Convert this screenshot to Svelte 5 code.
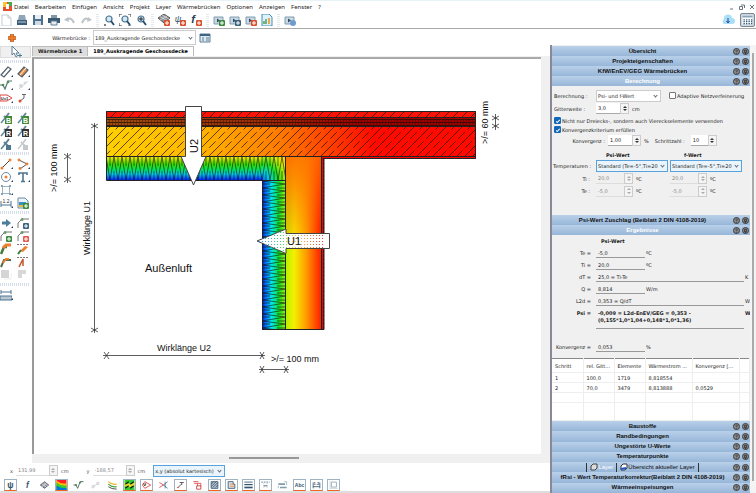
<script>
  let menus = [
    "Datei",
    "Bearbeiten",
    "Einfügen",
    "Ansicht",
    "Projekt",
    "Layer",
    "Wärmebrücken",
    "Optionen",
    "Anzeigen",
    "Fenster",
    "?",
  ];

  let activeTab = "189_Auskragende Geschossdecke";
  let tabs = ["Wärmebrücke 1", "189_Auskragende Geschossdecke"];

  let adaptive = false;
  let quads = true;
  let criterion = true;

  // shapes of every icon on a 12 x 12 grid
  const doc = '<path d="M1 3h9v7H1z" fill="#c9d8e2" stroke="#7f9cb0"/><path d="M4 4.500l3 2-3 2z" fill="#2f4a5e"/>';
  const plusBadge = (c) =>
    `<rect x="6" y="6" width="6" height="6" rx="1" fill="${c}"/><path d="M9 7v4M7 9h4" stroke="#fff"/>`;
  const pipette = (c) =>
    `<path d="M1 11l5-6" stroke="${c}" stroke-width="1.500"/><path d="M4 4l4 4M6 5l3-4" stroke="${c}" stroke-width="2"/>`;
  const letter = (c, t) =>
    `<rect x="5" y="4" width="7" height="8" fill="${c}"/><text x="8.500" y="10.500" font-size="7" font-weight="bold" text-anchor="middle" fill="#fff">${t}</text>`;
  const loupe =
    '<circle cx="6" cy="5" r="3" fill="#d5e9f5" stroke="#4b7390" stroke-width="1.200"/><path d="M8 7l3 4" stroke="#244d6b" stroke-width="1.800"/>';
  const node = '<path d="M1 11V6l4-4h7" stroke="#777"/><circle cx="5" cy="2.500" r="1.500" fill="#6a9a72"/>';
  const rainbow =
    '<path d="M0 0h12v12H0z" fill="#f22"/><path d="M0 1q5 4 12 3v8H0z" fill="#fb0"/><path d="M0 3q5 4 12 4v5H0z" fill="#3c3"/><path d="M0 7q5 3 12 3v2H0z" fill="#07d"/>';

  const icons = {
    neu: '<path d="M2 1h6l3 3v8H2z" fill="#fff" stroke="#c3cdd6"/><path d="M8 1v3h3" stroke="#c3cdd6"/>',
    open: '<path d="M3 1h6l1 5H2z" fill="#8fa6b8"/><path d="M1 6h10v5H1z" fill="#3d5c7a"/><path d="M2 8h8" stroke="#b9cad6"/>',
    save: '<path d="M1 1h10v10H1z" fill="#4f708c"/><path d="M3 1h6v4H3z" fill="#e8eff4"/><path d="M3 7h6v4H3z" fill="#cfdbe4"/>',
    print: '<path d="M3 1h6v3H3z" fill="#8298a8"/><path d="M0 4h12v5H0z" fill="#3a5870"/><path d="M3 7h6v4H3z" fill="#e6edf2" stroke="#5c7f99"/>',
    undo: '<path d="M3 6q4-4 7 3" stroke="#bcc3c8" stroke-width="2"/><path d="M0 6l4-3 1 5z" fill="#bcc3c8"/>',
    redo: '<path d="M9 6q-4-4-7 3" stroke="#bcc3c8" stroke-width="2"/><path d="M12 6l-4-3-1 5z" fill="#bcc3c8"/>',
    zoom: loupe + '<path d="M1 11h2M2 10v2" stroke="#555"/>',
    zoomfit: loupe + '<path d="M0 3V0h3M9 0h3v3M0 9v3h3M9 12h3" stroke="#333"/>',
    zoomplus: loupe + '<path d="M4 5h4M6 3v4" stroke="#222"/>',
    mesh: '<path d="M0 4l6-4 6 4-6 5z" fill="#8a949b" stroke="#555"/><path d="M2 2.500l7 4M4 1l7 4M2 6l7-4" stroke="#eee" stroke-width=".6"/>' + plusBadge("#d9512c"),
    psi: '<text x="4" y="8" font-size="9" font-style="italic" text-anchor="middle" fill="#31536d">ψ</text>' + plusBadge("#d9512c"),
    fval: '<text x="3" y="9" font-size="11" font-weight="bold" font-style="italic" text-anchor="middle" fill="#243f55">f</text>' + plusBadge("#d9512c"),
    layerplus: doc + plusBadge("#3b8b41"),
    layerb: doc + plusBadge("#3b6480"),
    layerx: doc + plusBadge("#d9512c"),
    report: '<path d="M1 0h7l3 3v9H1z" fill="#dff1fb" stroke="#3f8fb9"/><path d="M3 10V7M5 10V5" stroke="#4aa64f" stroke-width="1.500"/><path d="M8 10V4" stroke="#f08a24" stroke-width="1.500"/>',
    layerdot: doc + '<circle cx="9" cy="9" r="3" fill="#6d9bd1"/>',
    plus: '<path d="M6 2v8M2 6h8" stroke="#9a4a17" stroke-width="3.600"/><path d="M6 2v8M2 6h8" stroke="#ec7a26" stroke-width="2.400"/>',
    card: '<path d="M1 2h10v8H1z" fill="#dce9f0" stroke="#5c7f99"/><path d="M1 3h10" stroke="#3c6380" stroke-width="2"/><path d="M3 6h2M7 6h3M3 8h2M7 8h3" stroke="#5c7f99"/>',
    cursor: '<path d="M2 0v9l2-2 2 4 1.500-1L6 7h3z" fill="#fff" stroke="#5c7f99"/><path d="M8 9.500h4M10 7.500v4" stroke="#4d7a99"/>',
    wall: '<path d="M1 9l7-8 3 2-7 8z" fill="#fff" stroke="#52616d" stroke-width="1.200"/>',
    wallfill: '<path d="M1 8l6-7 4 3-6 7z" fill="#ef8c3b" stroke="#52616d" stroke-width="1.200"/><path d="M3 9l6-7" stroke="#fff"/>',
    poly: '<path d="M0 6h3l2 4 3-8h4" stroke="#55776b" stroke-width="1.200"/><circle cx="3" cy="6" r="1.300" fill="#4e8c58"/><circle cx="8" cy="3" r="1.300" fill="#4e8c58"/>',
    polyoff: '<path d="M2 10l9-8" stroke="#d2d6d9"/><circle cx="4" cy="7" r="2" fill="#d5d9dc"/><circle cx="8" cy="4" r="1.500" fill="#d5d9dc"/>',
    uarrow: '<path d="M0 3h7l5 3-5 3H0z" fill="#fff" stroke="#e04040"/><text x="4.500" y="7.500" font-size="4" font-weight="bold" text-anchor="middle" fill="#222">U=1</text>',
    temp: '<path d="M3 9l4-3V3M5 2.500h4" stroke="#666"/><circle cx="3" cy="9" r="1.500" fill="#d9512c"/>',
    pipb: pipette("#6b8696") + letter("#3f8a3a", "B"),
    pipr: pipette("#6b8696") + letter("#333", "R"),
    pipw: pipette("#5b8199") + '<rect x="6" y="7" width="5" height="5" fill="#4f7590"/>',
    pipoff: pipette("#c8cdd1") + '<rect x="6" y="7" width="5" height="5" fill="#c2c8cc"/>',
    line: '<path d="M2 10l8-8" stroke="#444"/><circle cx="2" cy="10" r="1.500" fill="#ef7f2e"/><circle cx="10" cy="2" r="1.500" fill="#ef7f2e"/>',
    pline: '<path d="M2 2l8 4-7 5" stroke="#555"/><circle cx="2" cy="2" r="1.400" fill="#ef7f2e"/><circle cx="10" cy="6" r="1.400" fill="#ef7f2e"/><circle cx="3" cy="10.500" r="1.400" fill="#ef7f2e"/>',
    circle: '<circle cx="6" cy="6" r="4.500" stroke="#6d8a9e"/><circle cx="6" cy="6" r="1.500" fill="#ef7f2e"/>',
    text: '<path d="M2 4V2h8v2M6 2v9M4 10.500h4" stroke="#4f7590" stroke-width="1.600"/>',
    rect: '<path d="M2.500 2.500h7v7h-7z" stroke="#9db3c1"/><path d="M1 1h2v2H1zM9 1h2v2H9zM1 9h2v2H1zM9 9h2v2H9z" fill="#8aa3b3"/>',
    dim: '<path d="M1 4v6M11 4v6M1 8h10" stroke="#4f7590"/><text x="6" y="6" font-size="5" text-anchor="middle" fill="#333">1.2</text>',
    image: '<path d="M1 1h7l3 3v7H1z" fill="#eaf5fb" stroke="#6d8a9e"/><path d="M2 5h7v4H2z" fill="#3b8fc4"/><path d="M2 8h7v2H2z" fill="#e7b93c"/>' + plusBadge("#3b8b41"),
    arrow: '<path d="M2 4.500h4V2l5 4-5 4V7.500H2z" fill="#4f7c99"/>',
    nodeb: node + plusBadge("#3b6480"),
    nodeg: node + plusBadge("#3b8b41"),
    noder: node + plusBadge("#e25a50"),
    cuta: '<path d="M1 11l3-7h3" stroke="#3e7a3c" stroke-width="2.500"/><path d="M3 5l3-3h5" stroke="#ef7f2e" stroke-width="3"/>',
    cutb: '<path d="M0 1.500h12" stroke="#777" stroke-dasharray="2 1"/><path d="M3 8l5-5 3 1-5 5z" fill="#ef7f2e"/><path d="M1 11l3-4" stroke="#3e7a3c" stroke-width="2"/>',
    cutc: '<path d="M1 11l3-7h7" stroke="#4e6b4d" stroke-width="2"/><path d="M3 7l3-4h3" stroke="#ef7f2e" stroke-width="2"/>',
    cutd: '<path d="M0 1.500h12" stroke="#777" stroke-dasharray="2 1"/><path d="M2 11l4-8v7" stroke="#c7562a" stroke-width="1.500"/>',
    sq: '<path d="M1 1h8v8H1z" fill="#d5d5d5"/><path d="M4 10h7V4" stroke="#eee"/>',
    corner: '<path d="M1 1h8v4H5v4H1z" fill="#d8d8d8"/>',
    scale: '<path d="M1 1v4M11 1v4M1 3h10" stroke="#4f7590"/><path d="M0 7h12v4H0z" fill="#b9c8d2" stroke="#4f7590"/>',
    bpsi: '<text x="6" y="9" font-size="10" font-weight="bold" text-anchor="middle" fill="#34536c">ψ</text>',
    bf: '<text x="6" y="9" font-size="10" font-weight="bold" font-style="italic" text-anchor="middle" fill="#34536c">f</text>',
    bmesh: '<path d="M1 6l5-4 5 4-5 4z" fill="#8e999f" stroke="#556"/><path d="M3 4.500l5 4M5 3l5 4M3 8l5-4" stroke="#eee" stroke-width=".7"/>',
    rainbow,
    link: '<path d="M3 8l6-4" stroke="#ccc"/><circle cx="3" cy="8" r="1.500" stroke="#c5c9cc"/><circle cx="9" cy="4" r="1.500" stroke="#c5c9cc"/>',
    iso: '<path d="M1 2q4 4 10 3" stroke="#e9b52a" stroke-width="1.500"/><path d="M1 5q4 4 10 3" stroke="#4ba84b" stroke-width="1.500"/><path d="M1 8q4 3 10 3" stroke="#333"/>',
    flux: '<path d="M0 0h12v12H0z" fill="#3c3"/><path d="M0 3q6 3 12 0v4q-6 3-12 0z" fill="#e6e02a"/><path d="M1 5l4-3M7 5l4-3M1 10l4-3M7 10l4-3" stroke="#111" stroke-width="1.400"/>',
    uval: '<path d="M1 6l3-4 7 4-7 4z" stroke="#e04040"/><path d="M3 4v2q1 2 2 0V4" stroke="#222"/>',
    adia: '<path d="M1 3l5 3-5 3" stroke="#e04040"/><path d="M11 2L6 6l5 4M8 2v8" stroke="#4f7590"/>',
    dot: '<path d="M3 9l4-4M5 3h5M7.500 3v3" stroke="#444"/><circle cx="3" cy="9" r="1" fill="#e04040"/>',
    pages: '<path d="M1 2h6M2 4h4" stroke="#e04040"/><path d="M6 4h4v4H6z" stroke="#e04040"/><path d="M5 7h5v4H5z" fill="#fff" stroke="#c03030"/>',
    hatch: '<path d="M2 2h8v8H2z" fill="#b9c8d2" stroke="#34536c"/><path d="M2 5l3-3M2 8l6-6M4 9l6-6M7 9l3-3" stroke="#34536c"/>',
    outline: '<path d="M2 2h6v3h2v5H2z" fill="#d9e4eb" stroke="#34536c"/><path d="M4 5h4M4 7.500h5" stroke="#ef7f2e"/>',
    bars: '<path d="M1 2.500h10" stroke="#34536c"/><path d="M1 5.500h10" stroke="#34536c" stroke-width="1.500"/><path d="M1 9h10" stroke="#34536c" stroke-width="2"/>',
    gridt: '<path d="M1 2.500h10" stroke="#4f7590" stroke-dasharray="2 1"/><path d="M4 4v6M8 4v6" stroke="#8aa3b3" stroke-dasharray="1 1"/><path d="M4 7h4" stroke="#555"/>',
    tags: '<path d="M1 4h8v2H1zM3 8h8v2H3z" fill="#7f9bad"/><path d="M8 2h3v4M1 7v3" stroke="#9db3c1"/>',
    abc: '<text x="6" y="8" font-size="6" font-weight="bold" text-anchor="middle" fill="#34536c">Abc</text>',
    measure: '<path d="M2 3v7M10 3v7M2 8h8" stroke="#34536c"/><text x="6" y="6" font-size="5" font-weight="bold" text-anchor="middle" fill="#34536c">1.2</text>',
    frame: '<path d="M3.500 2.500h6v6h-6z" stroke="#8aa3b3"/><path d="M2 1v9M1 10h10" stroke="#c5d0d7"/>',
  };

  let mainTools = [
    ["neu", "open", "save", "print", "undo", "redo"],
    ["zoom", "zoomfit", "zoomplus"],
    ["mesh", "psi", "fval"],
    ["layerplus", "layerb", "layerx", "report"],
    ["layerdot"],
  ];

  let sideTools = [
    ["wall", "wallfill", "poly", "polyoff", "uarrow", "temp"],
    ["pipb", "pipb", "pipr", "pipr", "pipw", "pipoff"],
    ["line", "pline", "circle", "text", "rect", "", "dim", "image"],
    ["arrow", "nodeb", "nodeg", "noder", "cuta", "cutb", "cutc", "cutd", "sq", "corner"],
    ["scale"],
  ];
  let withMenu = ["wall", "wallfill", "poly", "polyoff", "uarrow", "line", "pline", "circle", "text", "rect", "dim", "arrow", "scale"];

  let viewTools = [
    ["bpsi", true],
    ["bf", false],
    ["bmesh", false],
    ["rainbow", true],
    ["poly", false],
    ["link", false],
    ["iso", false],
    ["flux", true],
    ["uval", true],
    ["adia", false],
    ["dot", true],
    ["pages", false],
    ["hatch", true],
    ["outline", true],
    ["bars", true],
    ["gridt", true],
    ["tags", false],
    ["abc", true],
    ["measure", true],
    ["frame", true],
  ];

  let results = [
    { label: "Te =", value: "-5,0", unit: "ºC" },
    { label: "Ti =", value: "20,0", unit: "ºC" },
    { label: "dT =", value: "25,0 = Ti-Te", unit: "K", wide: true },
    { label: "Q =", value: "8,814", unit: "W/m" },
    { label: "L2d =", value: "0,353 = Q/dT", unit: "W", wide: true },
  ];

  let steps = [
    ["1", "100,0", "1719", "8,818554", ""],
    ["2", "70,0", "3479", "8,813888", "0,0529"],
    ["", "", "", "", ""],
    ["", "", "", "", ""],
  ];

  // hatching and insulation symbols of the section
  const range = (from, to, step) => {
    let out = [];
    for (let v = from; v < to; v += step) out.push(v);
    return out;
  };
  const screed = range(100, 476, 9).map((x) => `M${x} 119l9-9`).join("");
  const concreteSolid = range(80, 476, 16).map((x) => `M${x} 157l31-31`).join("");
  const concreteDash = range(88, 476, 16).map((x) => `M${x} 157l31-31`).join("");
  const woolH = "M106 157" + range(106, 286, 8).map(() => "l4 23l4-23").join("");
  const woolHLines = range(110, 286, 8).map((x) => `M${x} 157v9M${x + 4} 171v9`).join("");
  const woolV = "M262 181" + range(181, 330, 7).map(() => "l23 3l-23 4").join("");
  const woolVLines = range(184, 330, 7).map((y) => `M262 ${y}h8M277 ${y + 4}h8`).join("");
</script>

{#snippet icon(name)}
  <svg class="icon" viewBox="0 0 12 12" fill="none" aria-hidden="true">{@html icons[name]}</svg>
{/snippet}

{#snippet bar(title, light)}
  <div class="bar">
    <span class="bar-title" class:light>{title}</span>
    {@render barButtons()}
  </div>
{/snippet}

{#snippet barButtons()}
  <span class="bar-buttons">
    <button class="round" aria-label="Hilfe">
      <svg viewBox="0 0 8 8"><circle cx="4" cy="4" r="3.500" /><path d="M3 3q1-1.500 2 0L4 4.500M4 5.500v1" /></svg>
    </button>
    <button class="round" aria-label="Anheften">
      <svg viewBox="0 0 8 8"><circle cx="4" cy="4" r="3.500" /><path d="M3 2.500h2v3H3zM4 5v2" /></svg>
    </button>
  </span>
{/snippet}

{#snippet spin(id, value, label, disabled)}
  <span class="spin" class:disabled>
    <input {id} {value} {disabled} aria-label={label} />
    <span class="arrows">
      <button {disabled} class="up" aria-label="Erhöhen"></button>
      <button {disabled} class="down" aria-label="Verringern"></button>
    </span>
  </span>
{/snippet}

<div class="window">
  <header>
    <nav class="menu">
      <svg class="logo" viewBox="0 0 9 9" aria-hidden="true">
        <path d="M0 0h9v9H0z" fill="#e5502b" /><path d="M0 0h4v5H0z" fill="#f9c42c" />
        <path d="M5 0h4v4H5z" fill="#4da64a" /><path d="M3 2h3v5H3z" fill="#fff" />
      </svg>
      {#each menus as menu}
        <button>{menu}</button>
      {/each}
      <span class="window-buttons">
        <button aria-label="Minimieren"><svg viewBox="0 0 8 8"><path d="M2 6h3" /></svg></button>
        <button aria-label="Wiederherstellen"><svg viewBox="0 0 8 8"><path d="M1.500 3.500h3v3h-3zM3 2h3.500v3" /></svg></button>
        <button aria-label="Schließen"><svg viewBox="0 0 8 8"><path d="M2 2l4 4M6 2L2 6" /></svg></button>
      </span>
    </nav>

    <div class="toolbar">
      {#each mainTools as group, i}
        {#if i > 0}<span class="grip"></span>{/if}
        {#each group as tool}
          <button aria-label={tool}>{@render icon(tool)}</button>
        {/each}
      {/each}
      <span class="toolbar-right">
        <button class="cloud" aria-label="Download">
          <svg viewBox="0 0 14 12"><path d="M3 10a3 3 0 0 1 0-5 4 4 0 0 1 8-1 3 3 0 0 1 0 6z" fill="#a9e0f5" /><path d="M7 4v4M5.500 7L7 9l1.500-2" fill="none" stroke="#2540a8" /></svg>
        </button>
        <button class="keypad" aria-label="Raster">
          <svg viewBox="0 0 12 12"><path d="M0 2h12v9H0z" fill="#fff" /><path d="M0 2h12" stroke="#8ba3b5" stroke-width="2" /><path d="M2 5v6M5 5v6M8 5v6M11 5v6" stroke="#234d72" stroke-width="1.500" stroke-dasharray="1.500 .8" /></svg>
        </button>
      </span>
    </div>
  </header>

  <div class="body">
    <div class="work">
      <div class="bridge">
        <button aria-label="Neue Wärmebrücke">{@render icon("plus")}</button>
        <label for="bridge">Wärmebrücke :</label>
        <span class="select bridge-select">
          <select id="bridge"><option>189_Auskragende Geschossdecke</option></select>
        </span>
        <button aria-label="Eigenschaften">{@render icon("card")}</button>
      </div>

      <div class="middle">
        <aside class="side">
          <button class="pointer" aria-label="Auswahl">{@render icon("cursor")}</button>
          {#each sideTools as group}
            <div class="side-grip"></div>
            <div class="side-group">
              {#each group as tool}
                {#if tool}
                  <button aria-label={tool} class:has-menu={withMenu.includes(tool)}>{@render icon(tool)}</button>
                {:else}
                  <span></span>
                {/if}
              {/each}
            </div>
          {/each}
        </aside>

        <div class="drawing">
          <div class="tabs">
            {#each tabs as tab}
              <button class="tab" class:active={activeTab === tab} on:click={() => (activeTab = tab)}>{tab}</button>
            {/each}
          </div>
          <div class="canvas">
            <svg viewBox="34 59 507 395" preserveAspectRatio="xMinYMin meet">
              <defs>
                <linearGradient id="slab" gradientUnits="userSpaceOnUse" x1="106" y1="126" x2="370" y2="100">
                  <stop offset="0" stop-color="#ffd000" />
                  <stop offset="0.35" stop-color="#ffb400" />
                  <stop offset="0.65" stop-color="#ff7a00" />
                  <stop offset="1" stop-color="#ff0a00" />
                </linearGradient>
                <linearGradient id="floor" gradientUnits="userSpaceOnUse" x1="106" y1="0" x2="360" y2="0">
                  <stop offset="0" stop-color="#a04c10" />
                  <stop offset="0.6" stop-color="#a02c08" />
                  <stop offset="1" stop-color="#a00000" />
                </linearGradient>
                <linearGradient id="wool-h" x1="0" y1="0" x2="0" y2="1">
                  <stop offset="0" stop-color="#f0e800" />
                  <stop offset="0.3" stop-color="#3edc00" />
                  <stop offset="0.55" stop-color="#00e060" />
                  <stop offset="0.75" stop-color="#00c8f0" />
                  <stop offset="1" stop-color="#0020ff" />
                </linearGradient>
                <linearGradient id="wool-v">
                  <stop offset="0" stop-color="#0010e0" />
                  <stop offset="0.15" stop-color="#0070ff" />
                  <stop offset="0.4" stop-color="#00e8f0" />
                  <stop offset="0.7" stop-color="#10e030" />
                  <stop offset="1" stop-color="#a0f000" />
                </linearGradient>
                <radialGradient id="corner" gradientUnits="userSpaceOnUse" cx="262" cy="180" r="32">
                  <stop offset="0" stop-color="#0060ff" />
                  <stop offset="0.25" stop-color="#00d8e0" />
                  <stop offset="0.5" stop-color="#20e020" />
                  <stop offset="0.8" stop-color="#d8ee00" />
                  <stop offset="1" stop-color="#ffd000" />
                </radialGradient>
                <linearGradient id="wall">
                  <stop offset="0" stop-color="#b8f000" />
                  <stop offset="0.22" stop-color="#f4f000" />
                  <stop offset="0.55" stop-color="#ff9a00" />
                  <stop offset="0.85" stop-color="#ff3c00" />
                  <stop offset="1" stop-color="#ff1400" />
                </linearGradient>
                <linearGradient id="wall-top" x1="0" y1="0" x2="0.4" y2="1">
                  <stop offset="0" stop-color="#ff7000" />
                  <stop offset="0.35" stop-color="#ff7000" stop-opacity="0.7" />
                  <stop offset="1" stop-color="#ff7000" stop-opacity="0" />
                </linearGradient>
                <linearGradient id="dots-colour">
                  <stop offset="0.1" stop-color="#30a0ff" />
                  <stop offset="0.35" stop-color="#30d870" />
                  <stop offset="0.5" stop-color="#e8e040" />
                  <stop offset="0.7" stop-color="#ff9040" />
                  <stop offset="0.95" stop-color="#ff3030" />
                </linearGradient>
                <pattern id="dots" width="3" height="3" patternUnits="userSpaceOnUse">
                  <path d="M0 0h3v3H0z" fill="#000" /><path d="M1 1h1v1H1z" fill="#fff" />
                </pattern>
                <mask id="dot-mask"><path d="M257 241l29-12v4h37v16h-37v5z" fill="url(#dots)" /></mask>
                <clipPath id="clip-slab"><path d="M107 127h368v30H107z" /></clipPath>
                <clipPath id="clip-screed"><path d="M107 112h368v6H107z" /></clipPath>
                <clipPath id="clip-wool-h"><path d="M107 157h178v23H107z" /></clipPath>
                <clipPath id="clip-wool-v"><path d="M262 181h24v149h-24z" /></clipPath>
              </defs>

              <!-- slab with floor layers -->
              <path d="M322 156h154v3H322z" fill="#f00" />
              <path d="M106 126h370v31H106z" fill="url(#slab)" />
              <path d="M106 111h370v7H106z" fill="#fa1408" />
              <path d="M106 117h370v10H106z" fill="url(#floor)" />
              <g class="ink">
                <path d={screed} clip-path="url(#clip-screed)" />
                <g clip-path="url(#clip-slab)">
                  <path d={concreteSolid} />
                  <path d={concreteDash} stroke-dasharray="9 4" />
                </g>
                <path d="M106 119.500h370M106 122.500h370M106 125.500h370" />
                <path d="M106 121h370M106 124h370" stroke-dasharray="1 2" />
              </g>

              <!-- insulation -->
              <path d="M106 157h157v23H106z" fill="url(#wool-h)" />
              <path d="M262 157h24v24h-24z" fill="url(#corner)" />
              <path d="M262 180h24v150h-24z" fill="url(#wool-v)" />
              <g class="ink wool">
                <path d="{woolH}{woolHLines}" clip-path="url(#clip-wool-h)" />
                <path d="{woolV}{woolVLines}" clip-path="url(#clip-wool-v)" />
              </g>

              <!-- wall with plaster -->
              <path d="M286 157h37v173h-37z" fill="url(#wall)" />
              <path d="M286 157h37v90h-37z" fill="url(#wall-top)" />
              <path d="M322 157h2v173h-2z" fill="#e00808" />

              <g class="outline">
                <path d="M106.500 111.500h369v47H324v171h-61.500v-149h-156z" />
                <path d="M106 117.500h370M106 126.500h370M106 156.500h370M285.500 157v173M262 180.500h24M321.500 157v173" />
                <path d="M324 158.500h152M323.500 158v171" stroke-dasharray="3 1" />
              </g>

              <!-- heat flow arrows -->
              <path class="flow" d="M185.500 106.500h16v50h4.500L193.500 185 181 156.500h4.500z" />
              <path class="flow" d="M257 241l29-12v4.500h43.500v15H286v5z" />
              <path d="M257 229h70v25h-70z" fill="url(#dots-colour)" mask="url(#dot-mask)" />
              <text class="u" transform="translate(198 153) rotate(-90)">U2</text>
              <text class="u" x="287" y="245">U1</text>

              <!-- dimensions -->
              <g class="dim">
                <path d="M94.500 123v210M67.500 153v30M495.500 114v16M103 355.500h162M259 369.500h30" />
                <path d="M91 124l7 4M91 128l7-4M91 328l7 4M91 332l7-4M64 154l7 5M64 159l7-5M64 177l7 5M64 182l7-5M492 116l7 4M492 120l7-4M492 124l7 4M492 128l7-4" />
                <path d="M104 352l5 7M104 359l5-7M260 352l4 7M260 359l4-7M260 366l4 7M260 373l4-7M284 366l4 7M284 373l4-7" />
              </g>
              <g class="note">
                <text transform="translate(90 255) rotate(-90)">Wirklänge U1</text>
                <text transform="translate(57 192) rotate(-90)">&gt;/= 100 mm</text>
                <text transform="translate(488 144) rotate(-90)">&gt;/= 60 mm</text>
                <text x="157" y="351">Wirklänge U2</text>
                <text x="271" y="362">&gt;/= 100 mm</text>
                <text class="air" x="145" y="272">Außenluft</text>
              </g>
            </svg>
          </div>
          <div class="hscroll"><span></span></div>
        </div>
      </div>

      <footer>
        <div class="coords">
          <label for="posx">x</label>
          {@render spin("posx", "131,99", "x", true)}
          <span>cm</span>
          <label for="posy">y</label>
          {@render spin("posy", "-188,57", "y", true)}
          <span>cm</span>
          <span class="select blue mode">
            <select aria-label="Koordinaten"><option>x,y (absolut kartesisch)</option></select>
          </span>
        </div>
        <div class="views">
          {#each viewTools as [tool, on]}
            <button class:on aria-label={tool}>{@render icon(tool)}</button>
          {/each}
        </div>
      </footer>
    </div>

    <aside class="panel">
      <div class="panel-content">
        <div class="bars">
          {@render bar("Übersicht")}
          {@render bar("Projekteigenschaften")}
          {@render bar("KfW/EnEV/GEG Wärmebrücken")}
          {@render bar("Berechnung", true)}
        </div>

        <form class="calc" on:submit|preventDefault>
          <div class="row">
            <label class="name" for="kind">Berechnung :</label>
            <span class="select kind">
              <select id="kind"><option>Psi- und f-Wert</option></select>
            </span>
            <label class="check adaptive"><input type="checkbox" bind:checked={adaptive} />Adaptive Netzverfeinerung</label>
          </div>
          <div class="row">
            <label class="name" for="grid">Gitterweite :</label>
            {@render spin("grid", "3,0", "Gitterweite", false)}
            <span>cm</span>
          </div>
          <div class="checks">
            <label class="check"><input type="checkbox" bind:checked={quads} />Nicht nur Dreiecks-, sondern auch Viereckselemente verwenden</label>
            <label class="check"><input type="checkbox" bind:checked={criterion} />Konvergenzkriterium erfüllen</label>
          </div>
          <div class="row conv">
            <label class="conv-name" for="conv">Konvergenz :</label>
            {@render spin("conv", "1,00", "Konvergenz", false)}
            <span>%</span>
            <label class="count" for="count">Schrittzahl :</label>
            {@render spin("count", "10", "Schrittzahl", false)}
          </div>
          <div class="temps">
            <span></span>
            <strong>Psi-Wert</strong>
            <strong>f-Wert</strong>
            <span class="temps-name">Temperaturen :</span>
            <span class="select blue">
              <select aria-label="Temperaturen Psi-Wert"><option>Standard (Te=-5°,Ti=20</option></select>
            </span>
            <span class="select blue">
              <select aria-label="Temperaturen f-Wert"><option>Standard (Te=-5°,Ti=20</option></select>
            </span>
            <span class="end">Ti :</span>
            <span class="cell">{@render spin("ti-psi", "20,0", "Ti Psi-Wert", true)} ºC</span>
            <span class="cell">{@render spin("ti-f", "20,0", "Ti f-Wert", true)} ºC</span>
            <span class="end">Te :</span>
            <span class="cell">{@render spin("te-psi", "-5,0", "Te Psi-Wert", true)} ºC</span>
            <span class="cell">{@render spin("te-f", "-5,0", "Te f-Wert", true)} ºC</span>
          </div>
        </form>

        <div class="bars">
          {@render bar("Psi-Wert Zuschlag (Beiblatt 2 DIN 4108-2019)")}
          {@render bar("Ergebnisse", true)}
        </div>

        <div class="results">
          <strong class="results-title">Psi-Wert</strong>
          {#each results as r, i}
            <div class="result">
              <label for="res{i}">{r.label}</label>
              <input id="res{i}" class:wide={r.wide} value={r.value} readonly />
              <span>{r.unit}</span>
            </div>
          {/each}
          <div class="result psi">
            <label for="psi">Psi =</label>
            <textarea id="psi" class="wide" readonly value={"-0,009 = L2d-EnEV/GEG = 0,353 -\n(0,155*1,0*1,04+0,148*1,0*1,36)"}></textarea>
            <span>W</span>
          </div>
          <div class="result">
            <label for="konv">Konvergenz =</label>
            <input id="konv" value="0,053" readonly />
            <span>%</span>
          </div>
        </div>

        <table>
          <thead>
            <tr>
              <th class="c1">Schritt</th>
              <th class="c2">rel. Gitt...</th>
              <th class="c2">Elemente</th>
              <th class="c3">Wärmestrom ...</th>
              <th class="c3">Konvergenz [...</th>
              <th></th>
            </tr>
          </thead>
          <tbody>
            {#each steps as step}
              <tr>
                {#each step as value}
                  <td>{value}</td>
                {/each}
                <td></td>
              </tr>
            {/each}
          </tbody>
        </table>

        <div class="bars rest">
          {@render bar("Baustoffe")}
          {@render bar("Randbedingungen")}
          {@render bar("Ungestörte U-Werte")}
          {@render bar("Temperaturpunkte")}
          <div class="bar">
            <span class="bar-title layers">
              <button class="light">
                <svg viewBox="0 0 8 8"><path d="M1 3l2-2h4v4L5 7H1z" fill="#ddd" stroke="#444" /></svg>Layer
              </button>
              <button>
                <svg viewBox="0 0 8 8"><path d="M1 3l2-2h4v4L5 7H1z" fill="#fff" stroke="#333" /><path d="M1 6l5-1" stroke="#2456c8" stroke-width="2" /></svg>Übersicht aktueller Layer
              </button>
            </span>
            {@render barButtons()}
          </div>
          {@render bar("fRsi - Wert Temperaturkorrektur(Beiblatt 2 DIN 4108-2019)")}
          {@render bar("Wärmeeinspeisungen")}
        </div>
      </div>
      <div class="vscroll"><span></span></div>
    </aside>
  </div>
</div>

<style>
  :global(body) {
    margin: 0;
  }

  .window {
    display: flex;
    flex-direction: column;
    height: 100vh;
    overflow: hidden;
    background: #fff;
    color: #222;
    font-family: "DejaVu Sans", Verdana, sans-serif;
    font-size: 5px;
    line-height: 8px;
  }

  button,
  input,
  select,
  textarea {
    box-sizing: border-box;
    margin: 0;
    padding: 0;
    border: none;
    border-radius: 0;
    background: none;
    color: inherit;
    font: inherit;
    min-width: 0;
  }

  .icon {
    display: block;
    width: 12px;
    height: 12px;
    font-family: "Liberation Sans", Arial, sans-serif;
  }

  /* Menu and toolbar */
  .menu {
    display: flex;
    align-items: center;
    gap: 6px;
    height: 12px;
    padding-left: 3px;
    border-top: 1px solid #e6f4f8;
    box-sizing: border-box;
    font-family: "Noto Sans", "Open Sans", sans-serif;
    font-size: 6px;
  }

  .logo {
    width: 9px;
    height: 9px;
    margin-right: -4px;
  }

  .window-buttons {
    display: flex;
    gap: 2px;
    margin-left: auto;
  }

  .window-buttons svg {
    display: block;
    width: 8px;
    height: 8px;
    fill: none;
    stroke: #678;
  }

  .toolbar {
    display: flex;
    align-items: center;
    gap: 4px;
    height: 17px;
    border-bottom: 1px solid #aaa;
    box-sizing: border-box;
  }

  .grip {
    width: 3px;
    height: 13px;
    background: repeating-linear-gradient(#e4e9ee 0 1px, #fff 1px 2px);
  }

  .toolbar-right {
    display: flex;
    align-items: center;
    gap: 5px;
    margin-left: auto;
    padding-right: 1px;
  }

  .cloud svg {
    display: block;
    width: 14px;
    height: 12px;
  }

  .keypad {
    padding: 1px;
    border: 1px solid #7d8790;
    border-radius: 2px;
    background: #ccd8e2;
  }

  .keypad svg {
    display: block;
    width: 11px;
    height: 10px;
  }

  .body {
    display: flex;
    flex: 1;
    min-height: 0;
  }

  .work {
    display: flex;
    flex: 1;
    flex-direction: column;
    min-width: 0;
  }

  .bridge {
    display: flex;
    align-items: center;
    gap: 3px;
    height: 17px;
    padding-left: 6px;
  }

  .bridge label {
    width: 69px;
    text-align: right;
  }

  /* Selects and spinners */
  .select {
    position: relative;
    display: block;
    box-sizing: border-box;
    height: 12px;
    border: 1px solid #ccc;
    background: #fff;
  }

  .bridge-select {
    width: 103px;
    height: 15px;
  }

  .select::after {
    content: "";
    position: absolute;
    top: 50%;
    right: 3px;
    width: 3px;
    height: 3px;
    margin-top: -2px;
    border-right: 1px solid #667;
    border-bottom: 1px solid #667;
    box-sizing: border-box;
    transform: rotate(45deg);
    pointer-events: none;
  }

  .select select {
    display: block;
    width: 100%;
    height: 100%;
    padding-left: 1px;
    appearance: none;
  }

  .select.blue {
    border-color: #5aa2dc;
    background: #eaf4fc;
  }

  .spin {
    display: flex;
    width: 33px;
    height: 11px;
  }

  .spin input {
    flex: 1;
    width: 0;
    padding-left: 2px;
    border-bottom: 1px solid #aaa;
    background: #fff;
  }

  .spin.disabled {
    color: #888;
  }

  .spin.disabled input {
    background: transparent;
    border-color: #ddd;
  }

  .arrows {
    display: flex;
    flex-direction: column;
    align-items: center;
    justify-content: space-evenly;
    width: 9px;
    box-sizing: border-box;
    border: 1px solid #ccc;
    background: #f4f4f4;
  }

  .arrows button {
    width: 4px;
    border: 2px solid transparent;
  }

  .arrows .up {
    border-top: none;
    border-bottom-color: #333;
  }

  .arrows .down {
    border-bottom: none;
    border-top-color: #333;
  }

  .disabled .arrows .up {
    border-bottom-color: #aaa;
  }

  .disabled .arrows .down {
    border-top-color: #aaa;
  }

  /* Left tool column */
  .middle {
    display: flex;
    flex: 1;
    min-height: 0;
  }

  .side {
    width: 32px;
    flex: none;
  }

  .pointer {
    display: flex;
    justify-content: center;
    align-items: center;
    width: 31px;
    height: 12px;
    border: 1px solid #ddd;
    background: #f0f0f0;
  }

  .side-grip {
    height: 3px;
    margin: 2px 2px 2px 0;
    background: repeating-linear-gradient(90deg, #d5dcea 0 1px, #fff 1px 2px);
  }

  .side-group {
    display: grid;
    grid-template-columns: 12px 12px;
    column-gap: 5px;
    grid-auto-rows: 13px;
  }

  .side-group button {
    position: relative;
  }

  .side-group .has-menu::after {
    content: "";
    position: absolute;
    right: -1px;
    bottom: 1px;
    border: 1px solid #223a66;
    border-top-color: transparent;
    border-left-color: transparent;
  }

  .drawing {
    display: flex;
    flex: 1;
    flex-direction: column;
    min-width: 0;
    background: #f0f0f0;
  }

  .tabs {
    display: flex;
    height: 10px;
    background: #fff;
  }

  .tab {
    padding: 0 5px;
    border: 1px solid #bbb;
    border-bottom: none;
    background: #ddd;
    font-weight: bold;
    line-height: 9px;
  }

  .tab.active {
    border-left: none;
    background: #fff;
    color: #000;
  }

  .canvas {
    flex: 1;
    min-height: 0;
    margin-top: 1px;
    margin-right: 9px;
    border-top: 2px solid #aaa;
    border-left: 2px solid #999;
    background: #fff;
  }

  .canvas svg {
    display: block;
    width: 100%;
    height: 100%;
    font-family: "Liberation Sans", Arial, sans-serif;
  }

  .ink {
    fill: none;
    stroke: #1a0d00;
    stroke-width: 0.7;
  }

  .wool {
    stroke-width: 0.6;
  }

  .outline {
    fill: none;
    stroke: #222;
  }

  .flow {
    fill: #fff;
    stroke: #444;
  }

  .dim {
    fill: none;
    stroke: #333;
    stroke-width: 0.8;
  }

  .note {
    fill: #111;
    font-size: 9px;
  }

  .air {
    font-size: 11px;
  }

  .u {
    font-size: 11px;
    fill: #111;
  }

  .hscroll {
    display: flex;
    justify-content: center;
    height: 9px;
  }

  .hscroll span {
    width: 70px;
    height: 2px;
    margin-top: 3px;
    margin-right: 54px;
    background: #999;
  }

  /* Status rows */
  .coords {
    display: flex;
    align-items: center;
    gap: 3px;
    height: 15px;
    padding-left: 10px;
    color: #555;
  }

  .coords .spin {
    width: 42px;
  }

  .coords label + .spin + span + label {
    margin-left: 15px;
  }

  .mode {
    width: 72px;
    margin-left: 5px;
    color: #222;
  }

  .views {
    display: flex;
    gap: 4px;
    padding: 1px 0 0 4px;
    border-bottom: 2px solid #ddd;
  }

  .views button {
    width: 13px;
    height: 12px;
    border-bottom: 1px solid transparent;
    overflow: hidden;
  }

  .views .icon {
    width: 11px;
    height: 10px;
    margin: 0 auto;
  }

  .views .on {
    border: 1px solid #9fb4c0;
    border-bottom: 1px solid #f26522;
  }

  /* Right panel */
  .panel {
    display: flex;
    flex: none;
    width: 206px;
    margin-top: 16px;
  }

  .panel-content {
    display: flex;
    flex: 1;
    flex-direction: column;
    min-width: 0;
    border-left: 2px solid #889;
    background: #f0f0f0;
  }

  .bar {
    display: flex;
    align-items: center;
    height: 10px;
    padding-right: 1px;
    background: linear-gradient(#b9d0e9, #97b6d8);
    color: #111;
    font-family: "Liberation Sans", Arial, sans-serif;
    font-size: 6px;
    font-weight: bold;
    line-height: 9px;
  }

  .bars {
    padding-top: 1px;
  }

  .rest {
    display: grid;
    flex: 1;
    grid-auto-rows: 1fr;
    padding: 0;
  }

  .rest .bar {
    height: auto;
  }

  .bar-title {
    flex: 1;
    text-align: center;
    white-space: nowrap;
  }

  .light {
    color: #fff;
  }

  .bar-buttons {
    display: flex;
    gap: 2px;
  }

  .round svg {
    display: block;
    width: 7px;
    height: 7px;
    fill: #888;
    stroke: #333;
  }

  .layers {
    display: flex;
    justify-content: center;
    font-weight: normal;
  }

  .layers button {
    display: flex;
    align-items: center;
    padding: 0 3px;
    border-left: 1px solid #333;
  }

  .layers button:last-child {
    border-right: 1px solid #333;
  }

  .layers svg {
    width: 8px;
    height: 8px;
    fill: none;
  }

  .calc {
    height: 128px;
    padding-top: 3px;
    box-sizing: border-box;
    overflow: hidden;
  }

  .row {
    display: flex;
    align-items: center;
    gap: 3px;
    height: 13px;
    padding-left: 2px;
    white-space: nowrap;
  }

  .name {
    width: 39px;
  }

  .kind {
    width: 65px;
  }

  .checks {
    padding: 1px 0 0;
  }

  .check {
    display: flex;
    align-items: center;
    gap: 1px;
    height: 9px;
    padding-left: 2px;
    white-space: nowrap;
  }

  .adaptive {
    margin-left: 3px;
  }

  .check input {
    display: grid;
    place-items: center;
    width: 7px;
    height: 7px;
    border: 1px solid #777;
    border-radius: 1px;
    background: #fff;
    appearance: none;
  }

  .check input:checked {
    border-color: #1267b8;
    background: #1267b8;
  }

  .check input:checked::after {
    content: "";
    width: 2px;
    height: 4px;
    border-right: 1px solid #fff;
    border-bottom: 1px solid #fff;
    box-sizing: border-box;
    transform: rotate(45deg);
  }

  .conv-name {
    width: 51px;
    text-align: right;
  }

  .count {
    margin-left: 3px;
  }

  .conv .count + .spin {
    width: 26px;
    margin-left: 3px;
  }

  .temps {
    display: grid;
    grid-template-columns: 42px 72px 72px;
    grid-template-rows: 11px 12px 13px 12px;
    column-gap: 2px;
    align-items: center;
    margin-top: 2px;
    white-space: nowrap;
  }

  .temps strong {
    padding-left: 10px;
  }

  .temps strong + strong {
    padding-left: 14px;
  }

  .temps-name {
    padding-left: 1px;
  }

  .end {
    text-align: right;
    padding-right: 4px;
  }

  .cell {
    display: flex;
    align-items: center;
    gap: 3px;
  }

  .cell .spin {
    width: 37px;
  }

  .results {
    padding-bottom: 5px;
    overflow: hidden;
  }

  .results-title {
    display: block;
    padding: 2px 0 2px 49px;
  }

  .result {
    display: flex;
    align-items: center;
    gap: 1px;
    height: 12px;
  }

  .result label {
    flex: none;
    width: 39px;
    padding-right: 4px;
    text-align: right;
    white-space: nowrap;
  }

  .result input,
  .result textarea {
    flex: none;
    width: 49px;
    height: 10px;
    padding-left: 2px;
    border-bottom: 1px solid #999;
  }

  .result .wide {
    width: 148px;
  }

  .psi {
    align-items: flex-start;
    height: 34px;
    padding-top: 3px;
    box-sizing: border-box;
    font-weight: bold;
    line-height: 7px;
  }

  .result textarea {
    height: 19px;
    resize: none;
    overflow: hidden;
    white-space: pre;
  }

  table {
    width: 100%;
    border-collapse: collapse;
    border-top: 1px solid #888;
    background: #fff;
    table-layout: fixed;
  }

  th,
  td {
    height: 10px;
    padding: 0 0 0 3px;
    border: 1px solid #eee;
    border-top: none;
    border-left: none;
    box-sizing: border-box;
    font-weight: normal;
    text-align: left;
    white-space: nowrap;
    overflow: hidden;
  }

  th {
    height: 14px;
  }

  tbody tr:last-child td {
    height: 18px;
  }

  .c1 {
    width: 31px;
  }

  .c2 {
    width: 31px;
  }

  .c3 {
    width: 47px;
  }

  .vscroll {
    display: flex;
    justify-content: center;
    width: 6px;
    padding: 8px 0 12px;
    box-sizing: border-box;
    background: #f4f4f4;
  }

  .vscroll span {
    width: 2px;
    background: #aaa;
  }
</style>
